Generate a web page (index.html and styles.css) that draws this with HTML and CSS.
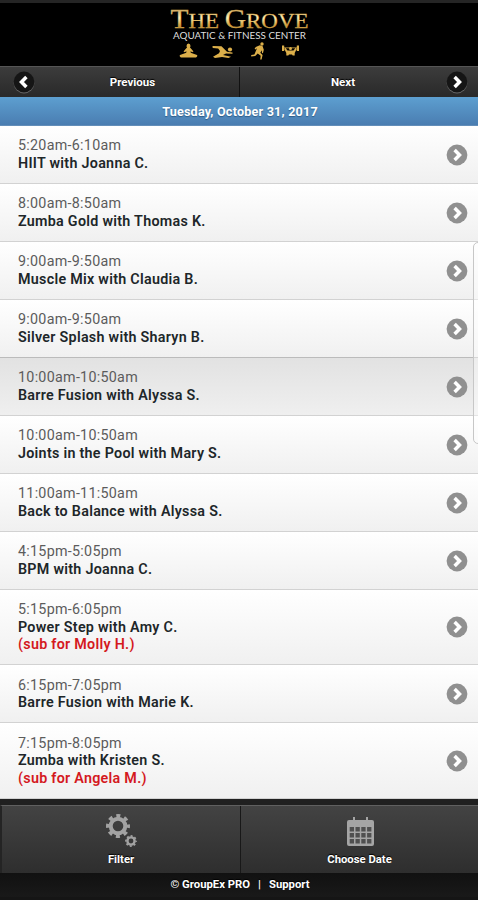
FILE: index.html
```html
<!DOCTYPE html>
<html lang="en">
<head>
<meta charset="utf-8">
<title>The Grove Schedule</title>
<link rel="stylesheet" href="styles.css">
</head>
<body>
<svg class="defs" width="0" height="0">
  <symbol id="next" viewBox="0 0 22 22"><circle cx="11" cy="11" r="10.4" fill="currentColor"/><path d="M8.6 6.1 13.5 11 8.6 15.9" fill="none" stroke="#fff" stroke-width="3.5"/></symbol>
</svg>
<header class="brand">
  <svg width="140" height="56" viewBox="169 4 140 56">
    <defs><linearGradient id="gold" x1="0" y1="0" x2="0" y2="1"><stop offset="0" stop-color="#a87930"/><stop offset=".48" stop-color="#fff0b5"/><stop offset=".7" stop-color="#d5a543"/><stop offset="1" stop-color="#916020"/></linearGradient></defs>
    <text class="logo" x="170.500" y="27.500" textLength="138" lengthAdjust="spacingAndGlyphs" fill="url(#gold)"><tspan class="cap">T</tspan>HE <tspan class="cap">G</tspan>ROVE</text>
    <text class="tagline" x="173" y="38.600" textLength="133" lengthAdjust="spacingAndGlyphs">AQUATIC &amp; FITNESS CENTER</text>
    <g fill="#dcaf4a">
      <ellipse cx="188.500" cy="46" rx="2" ry="2.500"/><path d="M186.500 48h4l3 3.500-1.500.8-1.300-1.300v1.700l6.300 2.200c1 1-.5 2.700-2 2.700h-13c-1.500 0-3-1.700-2-2.700l6.300-2.200V51l-1.300 1.300-1.500-.8z"/>
      <circle cx="230" cy="49.500" r="2.100"/><path d="M212.500 46l9 .3 5.500 5.500 5.500.6v1.300l-6.500-.1-3 1.400 8 1.700-2.500 1.200-6.500-1-7 1-2-1.200 6-3.400 1-2.400-1.800-2.300-5.500-.5z"/>
      <circle cx="262" cy="44" r="1.700"/><path d="M255.800 47l4-1.700 2.700.7 1.300 3.800-.8 3.200-1 .2-.2-3-1.500 2.500 2.300 2.200-1 4.700h-1.400l.5-3.900-3-2.300-2.500 2.700-4 .3v-1.300l3.200-.5 2.600-6.400-1.600 1.300-.8-.8z"/>
      <circle cx="290.500" cy="48.500" r="1.500"/><path d="M282 45.500h2.200v5.500H282zM296.800 45.500h2.200v5.500h-2.200zM284 47.500h13v.8h-13zM285.500 48l2 2.500h6l2-2.500 1.200 1-2 4v2.500h-2l-.7-1h-3l-.7 1h-2V53l-2-4z"/>
    </g>
  </svg>
</header>
<nav class="pager">
  <a class="prev"><svg class="flip" width="22" height="22"><use href="#next"/></svg><span>Previous</span></a>
  <a class="following"><span>Next</span><svg width="22" height="22"><use href="#next"/></svg></a>
</nav>
<h1 class="date"><span>Tuesday, October 31, 2017</span></h1>
<main class="schedule">
  <article class="row"><div><time>5:20am-6:10am</time><b>HIIT with Joanna C.</b></div><svg width="22" height="22"><use href="#next"/></svg></article>
  <article class="row"><div><time>8:00am-8:50am</time><b>Zumba Gold with Thomas K.</b></div><svg width="22" height="22"><use href="#next"/></svg></article>
  <article class="row"><div><time>9:00am-9:50am</time><b>Muscle Mix with Claudia B.</b></div><svg width="22" height="22"><use href="#next"/></svg></article>
  <article class="row"><div><time>9:00am-9:50am</time><b>Silver Splash with Sharyn B.</b></div><svg width="22" height="22"><use href="#next"/></svg></article>
  <article class="row active"><div><time>10:00am-10:50am</time><b>Barre Fusion with Alyssa S.</b></div><svg width="22" height="22"><use href="#next"/></svg></article>
  <article class="row"><div><time>10:00am-10:50am</time><b>Joints in the Pool with Mary S.</b></div><svg width="22" height="22"><use href="#next"/></svg></article>
  <article class="row"><div><time>11:00am-11:50am</time><b>Back to Balance with Alyssa S.</b></div><svg width="22" height="22"><use href="#next"/></svg></article>
  <article class="row"><div><time>4:15pm-5:05pm</time><b>BPM with Joanna C.</b></div><svg width="22" height="22"><use href="#next"/></svg></article>
  <article class="row tall"><div><time>5:15pm-6:05pm</time><b>Power Step with Amy C.</b><b class="sub">(sub for Molly H.)</b></div><svg width="22" height="22"><use href="#next"/></svg></article>
  <article class="row"><div><time>6:15pm-7:05pm</time><b>Barre Fusion with Marie K.</b></div><svg width="22" height="22"><use href="#next"/></svg></article>
  <article class="row tall"><div><time>7:15pm-8:05pm</time><b>Zumba with Kristen S.</b><b class="sub">(sub for Angela M.)</b></div><svg width="22" height="22"><use href="#next"/></svg></article>
</main>
<div class="edge-panel"></div>
<footer>
  <div class="actions">
    <a><svg width="32" height="36" viewBox="0 1 32 36" fill="none" stroke="#a2a2a2"><circle cx="13" cy="15" r="7.300" stroke-width="4"/><circle cx="13" cy="15" r="10.200" stroke-width="3.600" stroke-dasharray="4 4.011" stroke-dashoffset="2"/><circle cx="26" cy="30" r="3.600" stroke-width="2.400"/><circle cx="26" cy="30" r="5.100" stroke-width="1.600" stroke-dasharray="2 2.005" stroke-dashoffset="1"/></svg><span>Filter</span></a>
    <a><svg width="30" height="36" viewBox="-1 0 30 36"><path fill="#a5a5a5" d="M3 8h4V5h2v3h11V5h2v3h4q2 0 2 2v22q0 2-2 2H3q-2 0-2-2V10q0-2 2-2z"/><path stroke="#505050" stroke-width="4.500" stroke-dasharray="4.300 1.500" d="M3.700 17.300h21.700M3.700 23.300h21.700M3.700 29.300h21.700"/></svg><span>Choose Date</span></a>
  </div>
  <p><span>© GroupEx PRO</span><span>|</span><span>Support</span></p>
</footer>
</body>
</html>
```
FILE: styles.css
```css
* { box-sizing: border-box; }
body { margin: 0; width: 478px; height: 900px; display: flex; flex-direction: column; position: relative; overflow: hidden; background: #111; font-family: Roboto, "Liberation Sans", sans-serif; }
svg { display: block; flex: none; overflow: visible; }
.defs { position: absolute; }
.brand { height: 66px; padding-top: 1px; border-top: 3px solid #252525; background: #000; display: flex; justify-content: center; }
.logo { font: 21px "Liberation Serif", serif; stroke: #d7a94d; stroke-width: .3px; }
.cap { font-size: 27px; }
.tagline { font: 9px Lato, sans-serif; fill: #ddd; }
.pager { height: 31px; display: grid; grid-template-columns: 1fr 1fr; color: #fff; font-size: 11.5px; font-weight: 700; text-shadow: 0 -1px 1px #000; background: linear-gradient(#3c3c3c, #292929); border-top: 1px solid #555; }
.pager a { display: flex; align-items: center; padding: 0 10px 0 12px; }
.pager span { flex: 1; text-align: center; }
.prev { border-right: 1px solid #111; position: relative; left: 1px; }
.prev span { padding-left: 1px; }
.following { border-left: 1px solid #4a4a4a; }
.pager .following span { padding-right: 12px; }
.pager svg { color: #151515; filter: drop-shadow(0 1px 0 #666); }
.flip { transform: scaleX(-1); }
.date { height: 29px; margin: 0; display: flex; align-items: center; justify-content: center; padding-left: 2px; color: #fff; font-size: 12.6px; letter-spacing: .2px; background: linear-gradient(#5d9fd0, #4a7db1); border-bottom: 1px solid #638eb9; text-shadow: 0 1px 1px #2d5c88; }
.schedule { height: 673px; }
.row { height: 57.950px; display: flex; align-items: center; justify-content: space-between; padding: 1px 10px 0 18px; background: linear-gradient(#fff, #f0f0f0); border-bottom: 1px solid #d2d2d2; color: #909090; }
.row.tall { height: 75.700px; }
.row.active { background: linear-gradient(#e2e2e2, #efefef); box-shadow: 0 -1px #bbb; }
.row time, .row b { display: block; line-height: 17.600px; font-size: 14.300px; letter-spacing: .28px; white-space: nowrap; }
.row time { color: #5c5c5c; }
.row b { color: #202629; font-weight: 600; }
.row .sub { color: #d4191e; }
.edge-panel { position: absolute; left: 473px; top: 242px; width: 12px; height: 202px; border: 1px solid #c7c7c7; border-radius: 5px; background: #ffffff66; }
footer { flex: 1; border-top: 6px solid #202020; background: #151515; color: #fff; font-size: 11.300px; font-weight: 700; text-shadow: 0 -1px 1px #000; }
.actions { height: 68px; display: grid; grid-template-columns: 1fr 1fr; border-top: 1px solid #606060; border-left: 2px solid #242424; background: linear-gradient(#434343, #2e2e2e); }
.actions a { display: flex; flex-direction: column; align-items: center; padding-top: 6px; }
.actions a + a { border-left: 1px solid #181818; }
.actions span { margin-top: 5px; line-height: 13px; }
footer p { margin: 0; padding-left: 2px; display: flex; justify-content: center; gap: 8px; line-height: 24px; background: linear-gradient(#111, #191919); }
```
